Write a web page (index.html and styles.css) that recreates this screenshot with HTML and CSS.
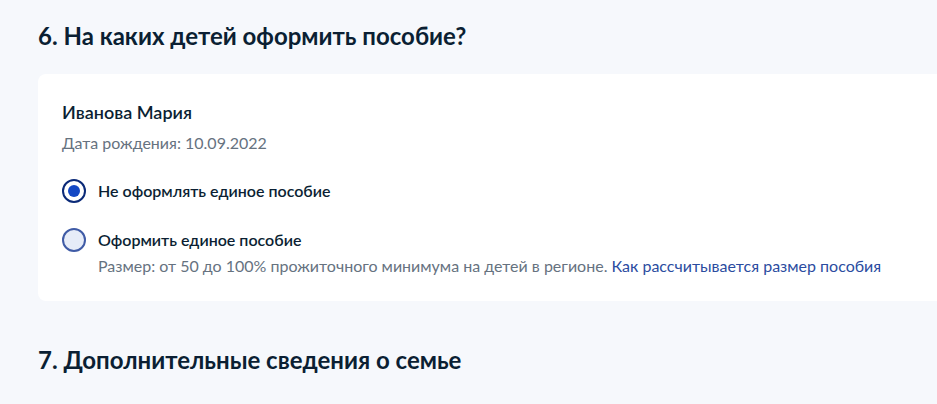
FILE: index.html
```html
<!DOCTYPE html>
<html lang="ru">
<head>
<meta charset="utf-8">
<link rel="stylesheet" href="styles.css">
</head>
<body>
<main class="page">
  <h2 class="section-title">6. На каких детей оформить пособие?</h2>
  <div class="card">
    <div class="child-name">Иванова Мария</div>
    <div class="child-birth">Дата рождения: 10.09.2022</div>
    <div class="options">
      <label class="option">
        <span class="radio radio-checked"><span class="dot"></span></span>
        <span class="option-body">
          <span class="option-label">Не оформлять единое пособие</span>
        </span>
      </label>
      <label class="option">
        <span class="radio"></span>
        <span class="option-body">
          <span class="option-label">Оформить единое пособие</span>
          <span class="option-hint">Размер: от 50 до 100% прожиточного минимума на детей в регионе. <a class="link" href="#">Как рассчитывается размер пособия</a></span>
        </span>
      </label>
    </div>
  </div>
  <h2 class="section-title section-title-2">7. Дополнительные сведения о семье</h2>
</main>
</body>
</html>
```
FILE: styles.css
```css
html, body {
  margin: 0;
  padding: 0;
  background: #f6f8fc;
  height: 100%;
  overflow: hidden;
}
body {
  font-family: Lato, "Noto Sans", sans-serif;
  color: #0b1f33;
}
.page {
  padding: 20px 0 0 38px;
}
.section-title {
  margin: 0;
  font-size: 24px;
  font-weight: 700;
  line-height: 32px;
  color: #0b1f33;
}
.card {
  margin-top: 22px;
  margin-right: -10px;
  background: #ffffff;
  border-radius: 8px;
  padding: 25px 24px 23px 24px;
}
.child-name {
  font-size: 18px;
  font-weight: 600;
  line-height: 26px;
}
.child-birth {
  margin-top: 6px;
  font-size: 16px;
  line-height: 24px;
  color: #66727f;
}
.options {
  margin-top: 24px;
  display: flex;
  flex-direction: column;
  gap: 25px;
}
.option {
  display: flex;
  gap: 12px;
  align-items: flex-start;
}
.radio {
  width: 20px;
  height: 20px;
  border-radius: 50%;
  border: 2px solid #3f5ba6;
  background: #e6ecf8;
  flex: none;
  display: flex;
  align-items: center;
  justify-content: center;
}
.radio-checked {
  border-color: #0b2a78;
  background: #fff;
}
.dot {
  width: 12px;
  height: 12px;
  border-radius: 50%;
  background: #1448c4;
}
.option-body {
  display: flex;
  flex-direction: column;
  gap: 2px;
}
.option-label {
  font-size: 16px;
  font-weight: 600;
  line-height: 24px;
}
.option-hint {
  font-size: 16px;
  line-height: 24px;
  color: #66727f;
}
.link {
  color: #2b4c9f;
  text-decoration: none;
}
.section-title-2 {
  margin-top: 43px;
}
```
